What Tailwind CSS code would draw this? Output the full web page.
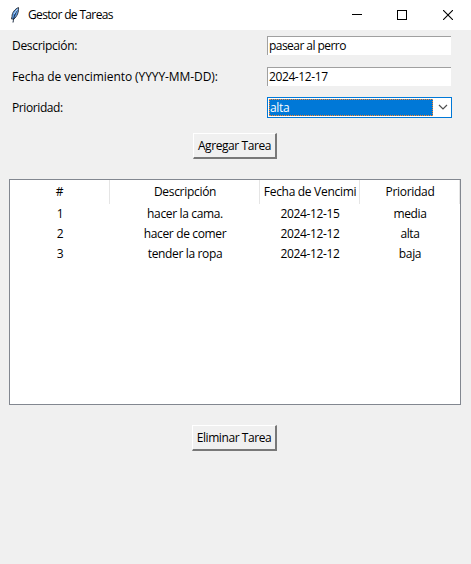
<!DOCTYPE html>
<html lang="es">
<head>
<meta charset="utf-8">
<title>Gestor de Tareas</title>
<script src="https://cdn.jsdelivr.net/npm/@tailwindcss/browser@4"></script>
</head>
<body class="w-[471px] h-[564px] overflow-hidden bg-[#f0f0f0] font-['Open_Sans','Noto_Sans',sans-serif] text-[12px] leading-[16px] tracking-[-0.3px] text-black whitespace-nowrap">
<header class="flex h-[30px] items-center bg-white pl-2">
  <svg class="h-[18px] w-[14px] shrink-0" viewBox="0 0 14 18" fill="none">
    <path d="M10.500 1.500C7 3 4 6.500 4 10.500L3.500 13L6 13C9 10.500 11 6 10.500 1.500Z" fill="#5b9be6" stroke="#3a3f47" stroke-width="1"/>
    <path d="M9 4.500C7.500 7 6 10 5 16.500" stroke="#16263c" stroke-width="1"/>
    <path d="M9.500 3L6 8" stroke="#b9d9f8" stroke-width="1"/>
  </svg>
  <h1 class="ml-[6px] w-[308px] tracking-[-0.65px]">Gestor de Tareas</h1>
  <svg class="ml-[16px] h-[10px] w-[10px] shrink-0" viewBox="0 0 10 10" shape-rendering="crispEdges"><path d="M0 4h10v1H0z" fill="#000"/></svg>
  <svg class="ml-[35px] h-[10px] w-[10px] shrink-0" viewBox="0 0 10 10" fill="none" stroke="#000" shape-rendering="crispEdges"><path d="M.5.5h9v9h-9z"/></svg>
  <svg class="ml-[36px] h-[10px] w-[10px] shrink-0" viewBox="0 0 10 10" fill="none" stroke="#000" stroke-width="1.100"><path d="M0 0l10 10M10 0L0 10"/></svg>
</header>
<form class="grid grid-cols-[255px_185px] auto-rows-[31px] pl-3">
  <label class="pt-2">Descripción:</label>
  <div class="mt-[6px] h-[19px] w-[184px] border-l border-t border-[#a0a0a0] bg-white pl-px leading-[18px] tracking-[-0.55px]"><span>pasear al perro</span></div>
  <label class="pt-2 tracking-[-0.08px]">Fecha de vencimiento (YYYY-MM-DD):</label>
  <div class="mt-[6px] h-[19px] w-[184px] border-l border-t border-[#a0a0a0] bg-white pl-px leading-[18px] tracking-[-0.4px]"><span>2024-12-17</span></div>
  <label class="pt-2 tracking-[-0.4px]">Prioridad:</label>
  <div class="mt-[5px] flex h-[21px] w-[185px] border border-[#0078d7] bg-white p-px">
    <div class="h-[17px] w-[164px] border border-dotted border-[#ff8728] bg-[#0078d7] leading-[16px] text-white">alta</div>
    <svg class="ml-[5px] mt-[5px] h-[7px] w-[10px]" viewBox="0 0 10 7" fill="none" stroke="#505050" stroke-width="1.200"><path d="M1 1l4 4 4-4"/></svg>
  </div>
</form>
<button type="button" class="ml-[193px] mt-[10px] block h-[26px] w-[84px] border border-b-2 border-r-2 border-b-[#787878] border-l-white border-r-[#787878] border-t-white text-center tracking-[-0.42px]">Agregar Tarea</button>
<section class="ml-[9px] mt-[20px] h-[226px] w-[452px] border border-[#828790] bg-white text-center">
  <div class="grid h-[24px] grid-cols-[100px_150px_100px_100px] leading-[23px]">
    <div class="border-r border-[#e5e5e5]">#</div>
    <div class="border-r border-[#e5e5e5] pl-px">Descripción</div>
    <div class="overflow-hidden border-r border-[#e5e5e5] pl-px">Fecha de Vencimi</div>
    <div class="border-r border-[#e5e5e5] pl-px">Prioridad</div>
  </div>
  <div class="grid auto-rows-[20px] grid-cols-[100px_150px_100px_100px] leading-[19px] tracking-[-0.35px]">
    <div>1</div><div>hacer la cama.</div><div>2024-12-15</div><div>media</div>
    <div>2</div><div>hacer de comer</div><div>2024-12-12</div><div>alta</div>
    <div>3</div><div>tender la ropa</div><div>2024-12-12</div><div>baja</div>
  </div>
</section>
<button type="button" class="ml-[192px] mt-[20px] block h-[26px] w-[85px] border border-b-2 border-r-2 border-b-[#787878] border-l-white border-r-[#787878] border-t-white text-center tracking-[-0.42px]">Eliminar Tarea</button>
</body>
</html>
